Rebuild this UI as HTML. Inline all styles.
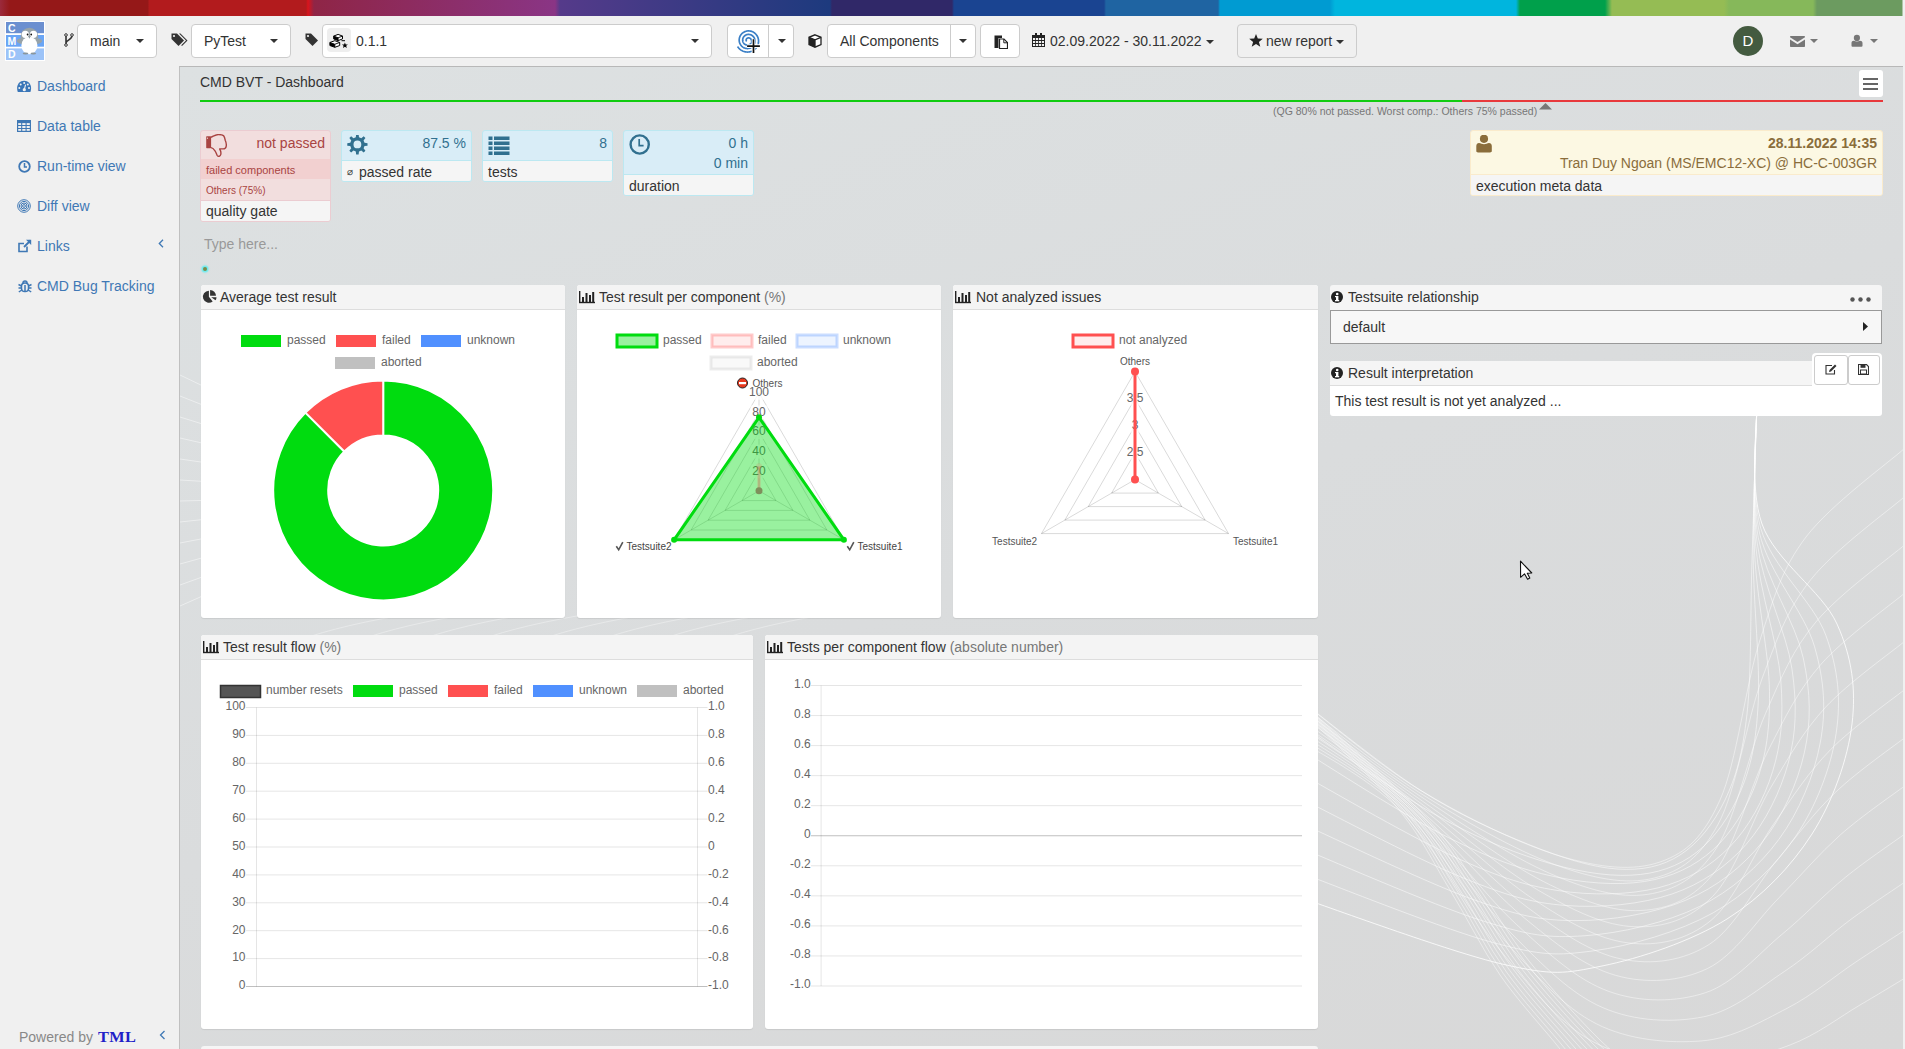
<!DOCTYPE html>
<html><head><meta charset="utf-8">
<style>
*{box-sizing:border-box;}
html,body{margin:0;padding:0;}
body{width:1905px;height:1049px;overflow:hidden;position:relative;background:#f0f0f0;font-family:"Liberation Sans",sans-serif;font-size:14px;color:#333;}
.abs{position:absolute;}
#strip{left:0;top:0;width:1905px;height:16px;background:linear-gradient(90deg,#9b2a3c 0px,#951818 10px,#951818 148px,#b21b1d 149px,#b21b1d 306px,#d9141c 308px,#8f2546 314px,#8a3585 555px,#553a8a 560px,#1d3a7e 830px,#302868 832px,#302868 952px,#1a4491 954px,#1a4491 1104px,#1f64a2 1106px,#1f64a2 1218px,#009bd2 1220px,#009bd2 1330px,#00b5de 1335px,#00b5de 1516px,#00a04b 1520px,#00a04b 1605px,#95bc54 1612px,#95bc54 1724px,#86b85a 1729px,#86b85a 1813px,#6c9b60 1817px,#6c9b60 1902px,#f0f0f0 1903px);}
#topbar{left:0;top:16px;width:1905px;height:51px;background:#f0f0f0;}
#sidebar{left:0;top:67px;width:179px;height:982px;background:#f0f0f0;}
#content{left:179px;top:66px;width:1724px;height:983px;border-top:1px solid #b8b8b8;border-left:1px solid #c0c0c0;background:linear-gradient(160deg,#dde1e2 0%,#dadcdd 50%,#d8d8d8 100%);overflow:hidden;}
.sel{position:absolute;top:24px;height:34px;background:#fff;border:1px solid #ccc;border-radius:4px;}
.caret{position:absolute;width:0;height:0;border-left:4px solid transparent;border-right:4px solid transparent;border-top:4px solid #333;}
.seltxt{position:absolute;top:8px;font-size:14px;color:#333;line-height:16px;}
.nav{position:absolute;left:37px;font-size:14px;color:#3f78b5;line-height:16px;}
.navi{position:absolute;left:17px;}
.panel{position:absolute;background:#fff;border-radius:3px;overflow:hidden;box-shadow:0 1px 1px rgba(0,0,0,0.08);}
.ph{position:absolute;left:0;top:0;right:0;height:25px;background:#f4f4f4;border-bottom:1px solid #ddd;}
.pt{position:absolute;top:4px;font-size:14px;color:#333;line-height:16px;white-space:nowrap;}
.kpi{position:absolute;border-radius:3px;overflow:hidden;}
svg text{font-family:"Liberation Sans",sans-serif;}
</style></head>
<body>
<div id="strip" class="abs"></div>
<div id="topbar" class="abs"></div>
<!-- logo -->
<div class="abs" style="left:5px;top:21px;width:40px;height:40px;background:#fff;">
 <svg width="38" height="38" viewBox="0 0 38 38" style="position:absolute;left:1px;top:1px">
  <rect x="0" y="0" width="38" height="11.2" fill="#6b8fd0"/>
  <rect x="0" y="13" width="38" height="11.7" fill="#6aa5f5"/>
  <rect x="0" y="26.4" width="38" height="11.6" fill="#9cc3f8"/>
  <text x="2" y="9.8" font-size="10.5" font-weight="bold" fill="#fff">C</text>
  <text x="1.6" y="23.2" font-size="10.5" font-weight="bold" fill="#fff">M</text>
  <text x="2" y="36.4" font-size="10.5" font-weight="bold" fill="#fff">D</text>
  <ellipse cx="23.4" cy="19" rx="12.6" ry="4" fill="#98a3a8"/>
  <circle cx="23.4" cy="14.5" r="8.8" fill="#98a3a8"/>
  <ellipse cx="23.4" cy="23.5" rx="8" ry="8.8" fill="#fff"/>
  <circle cx="19.3" cy="12.3" r="3.6" fill="#fff"/>
  <circle cx="27.5" cy="12.3" r="3.6" fill="#fff"/>
  <circle cx="21.6" cy="12.5" r="0.9" fill="#111"/>
  <circle cx="25.2" cy="12.5" r="0.9" fill="#111"/>
  <path d="M22.2 14.2 L24.6 14.2 L23.4 16.8 Z" fill="#8a969c"/>
  <ellipse cx="19.5" cy="31.5" rx="2.8" ry="1" fill="#8a969c"/>
  <ellipse cx="27.3" cy="31.5" rx="2.8" ry="1" fill="#8a969c"/>
 </svg>
</div>
<!-- branch icon -->
<svg class="abs" style="left:64px;top:33px" width="10" height="14" viewBox="0 0 10 14">
 <path d="M2 2.5 V11.5 M2 10 C2 7 8 7 8 2.5" stroke="#333" stroke-width="1.6" fill="none"/>
 <circle cx="2" cy="2" r="1.3" fill="#fff" stroke="#333" stroke-width="1"/>
 <circle cx="2" cy="12" r="1.3" fill="#fff" stroke="#333" stroke-width="1"/>
 <circle cx="8" cy="2" r="1.3" fill="#fff" stroke="#333" stroke-width="1"/>
</svg>
<div class="sel" style="left:77px;width:80px;"><span class="seltxt" style="left:12px;">main</span><span class="caret" style="left:58px;top:14px;"></span></div>
<!-- tags icon -->
<svg class="abs" style="left:171px;top:33px" width="17" height="14" viewBox="0 0 17 14">
 <path d="M0.5 0.5 H6 L13 7.5 L7.5 13 L0.5 6 Z" fill="#333"/>
 <circle cx="3" cy="3" r="1.1" fill="#f0f0f0"/>
 <path d="M8 0.5 H9.5 L16.5 7.5 L11 13 L10.2 12.2 L15 7.5 Z" fill="#333"/>
</svg>
<div class="sel" style="left:191px;width:100px;"><span class="seltxt" style="left:12px;">PyTest</span><span class="caret" style="left:78px;top:14px;"></span></div>
<!-- tag icon -->
<svg class="abs" style="left:305px;top:33px" width="14" height="14" viewBox="0 0 14 14">
 <path d="M0.5 0.5 H6 L13 7.5 L7.5 13 L0.5 6 Z" fill="#333"/>
 <circle cx="3" cy="3" r="1.1" fill="#f0f0f0"/>
</svg>
<div class="sel" style="left:322px;width:390px;">
 <div class="abs" style="left:4px;top:3px;width:24px;height:24px;background:#eee;border-radius:4px;"></div>
 <svg class="abs" style="left:5px;top:7px" width="22" height="17" viewBox="0 0 22 17"><polygon points="10.10,2.40 14.50,4.07 14.50,6.93 10.10,8.60 5.70,6.93 5.70,4.07" fill="#fff" stroke="#000" stroke-width="1" stroke-linejoin="round"/><polygon points="5.70,4.07 10.10,5.75 10.10,8.60 5.70,6.93" fill="#000"/><polyline points="5.70,4.07 10.10,5.75 14.50,4.07" fill="none" stroke="#000" stroke-width="0.9"/><line x1="10.10" y1="5.75" x2="10.10" y2="8.60" stroke="#000" stroke-width="0.9"/><rect x="13.5" y="8.2" width="3.5" height="1" fill="#000"/><polygon points="6.80,8.70 11.70,10.48 11.70,13.52 6.80,15.30 1.90,13.52 1.90,10.48" fill="#fff" stroke="#000" stroke-width="1" stroke-linejoin="round"/><polygon points="1.90,10.48 6.80,12.26 6.80,15.30 1.90,13.52" fill="#000"/><polyline points="1.90,10.48 6.80,12.26 11.70,10.48" fill="none" stroke="#000" stroke-width="0.9"/><line x1="6.80" y1="12.26" x2="6.80" y2="15.30" stroke="#000" stroke-width="0.9"/><path d="M16.9 10.4 L17.7 12.4 L19.9 12.5 L18.2 13.8 L18.8 15.9 L16.9 14.7 L15 15.9 L15.6 13.8 L13.9 12.5 L16.1 12.4 Z" fill="#000"/></svg>
 <span class="seltxt" style="left:33px;">0.1.1</span>
 <span class="caret" style="left:368px;top:14px;"></span>
</div>
<!-- diff button group -->
<div class="sel" style="left:727px;width:67px;">
 <div class="abs" style="left:40px;top:0;width:1px;height:32px;background:#ccc;"></div>
 <svg class="abs" style="left:0px;top:0px" width="40" height="34" viewBox="0 0 40 34">
  <path d="M18.70 16.35 L18.63 16.28 L18.55 16.21 L18.48 16.13 L18.42 16.04 L18.36 15.95 L18.31 15.85 L18.26 15.75 L18.22 15.64 L18.19 15.52 L18.16 15.41 L18.14 15.29 L18.13 15.16 L18.13 15.03 L18.13 14.91 L18.15 14.78 L18.17 14.65 L18.21 14.51 L18.25 14.38 L18.30 14.26 L18.37 14.13 L18.44 14.00 L18.52 13.88 L18.61 13.76 L18.71 13.65 L18.81 13.54 L18.93 13.44 L19.05 13.35 L19.18 13.26 L19.32 13.18 L19.47 13.11 L19.62 13.04 L19.78 12.99 L19.94 12.95 L20.11 12.91 L20.28 12.89 L20.46 12.88 L20.64 12.88 L20.82 12.89 L21.00 12.91 L21.18 12.95 L21.36 13.00 L21.54 13.06 L21.71 13.13 L21.89 13.22 L22.06 13.31 L22.22 13.42 L22.38 13.54 L22.53 13.68 L22.68 13.82 L22.81 13.98 L22.94 14.14 L23.06 14.31 L23.17 14.50 L23.27 14.69 L23.35 14.89 L23.42 15.09 L23.48 15.31 L23.53 15.53 L23.56 15.75 L23.58 15.98 L23.58 16.21 L23.57 16.44 L23.55 16.67 L23.51 16.90 L23.45 17.14 L23.38 17.37 L23.29 17.59 L23.19 17.81 L23.07 18.03 L22.94 18.24 L22.79 18.45 L22.63 18.64 L22.45 18.83 L22.26 19.01 L22.06 19.17 L21.85 19.33 L21.63 19.47 L21.39 19.59 L21.15 19.71 L20.89 19.81 L20.63 19.89 L20.37 19.95 L20.09 20.00 L19.81 20.04 L19.53 20.05 L19.25 20.05 L18.96 20.02 L18.68 19.98 L18.39 19.93 L18.11 19.85 L17.83 19.75 L17.55 19.64 L17.29 19.50 L17.02 19.35 L16.77 19.19 L16.53 19.00 L16.29 18.80 L16.07 18.58 L15.86 18.35 L15.67 18.10 L15.49 17.84 L15.33 17.56 L15.18 17.28 L15.05 16.98 L14.94 16.68 L14.85 16.36 L14.77 16.04 L14.72 15.71 L14.69 15.38 L14.68 15.04 L14.69 14.70 L14.72 14.36 L14.78 14.02 L14.85 13.69 L14.95 13.35 L15.07 13.02 L15.21 12.70 L15.38 12.39 L15.56 12.08 L15.76 11.79 L15.99 11.50 L16.23 11.23 L16.49 10.98 L16.77 10.74 L17.06 10.51 L17.37 10.31 L17.70 10.12 L18.03 9.95 L18.38 9.81 L18.74 9.68 L19.11 9.58 L19.49 9.50 L19.87 9.45 L20.26 9.42 L20.65 9.41 L21.04 9.43 L21.44 9.47 L21.83 9.54 L22.22 9.63 L22.60 9.75 L22.98 9.90 L23.35 10.07 L23.71 10.26 L24.06 10.47 L24.40 10.71 L24.72 10.98 L25.03 11.26 L25.32 11.56 L25.59 11.88 L25.85 12.23 L26.08 12.58 L26.29 12.96 L26.47 13.35 L26.64 13.75 L26.77 14.16 L26.89 14.58 L26.97 15.01 L27.03 15.45 L27.06 15.90 L27.06 16.34 L27.04 16.79 L26.98 17.24 L26.90 17.68 L26.79 18.12 L26.65 18.56 L26.48 18.99 L26.28 19.40 L26.06 19.81 L25.81 20.21 L25.54 20.59 L25.24 20.95 L24.91 21.29 L24.57 21.62 L24.20 21.92 L23.81 22.20 L23.41 22.46 L22.98 22.69 L22.54 22.90 L22.09 23.08 L21.62 23.23 L21.14 23.35 L20.66 23.44 L20.17 23.50 L19.67 23.53 L19.17 23.53 L18.66 23.50 L18.16 23.43 L17.66 23.34 L17.17 23.21 L16.69 23.05 L16.21 22.85 L15.74 22.63 L15.29 22.38 L14.85 22.10 L14.43 21.79 L14.03 21.45 L13.65 21.09 L13.29 20.70 L12.95 20.28 L12.64 19.85 L12.36 19.39 L12.10 18.92 L11.87 18.43 L11.68 17.92 L11.51 17.40 L11.38 16.87 L11.29 16.33 L11.22 15.78 L11.19 15.23 L11.20 14.67 L11.24 14.12 L11.32 13.56 L11.43 13.01 L11.57 12.47 L11.76 11.93 L11.97 11.40 L12.22 10.89 L12.50 10.39 L12.82 9.91 L13.16 9.44 L13.54 9.00 L13.94 8.58 L14.37 8.19 L14.83 7.82 L15.31 7.48 L15.82 7.17 L16.34 6.89 L16.88 6.65 L17.44 6.44 L18.01 6.26 L18.60 6.12 L19.20 6.01 L19.80 5.95 L20.41 5.92 L21.02 5.93 L21.63 5.98 L22.24 6.06 L22.84 6.19 L23.44 6.35 L24.03 6.56 L24.60 6.80 L25.16 7.07 L25.71 7.38 L26.24 7.73 L26.74 8.11 L27.22 8.53 L27.68 8.97 L28.11 9.45 L28.51 9.95 L28.88 10.47 L29.21 11.03 L29.51 11.60 L29.78 12.19 L30.01 12.81 L30.20 13.43 L30.35 14.07 L30.46 14.72 L30.53 15.38 L30.56 16.04 L30.54 16.71 L30.49 17.37 L30.39 18.04 L30.25 18.69 L30.07 19.34 L29.84 19.98 L29.58 20.61 L29.28 21.22 L28.93 21.81 L28.55 22.38 L28.14 22.93 L27.69 23.45 L27.20 23.94 L26.68 24.41 L26.14 24.84 L25.56 25.23 L24.96 25.60 L24.34 25.92 L23.69 26.21 L23.03 26.45 L22.35 26.65 L21.66 26.81 L20.95 26.93 L20.24 27.00 L19.52 27.03 L18.80 27.01 L18.08 26.95 L17.36 26.84 L16.65 26.69 L15.95 26.49 L15.26 26.24 L14.59 25.96 L13.93 25.62 L13.29 25.25 L12.68 24.84 L12.09 24.39 L11.53 23.90 L11.00 23.37 L10.50 22.81 L10.03 22.22 L9.61 21.60" fill="none" stroke="#3a7fc6" stroke-width="1.7"/>
  <path d="M25.5 14.3 V27.9 M19.1 21.1 H31.9" stroke="#fff" stroke-width="3.6"/>
  <path d="M25.5 14.3 V27.9 M19.1 21.1 H31.9" stroke="#111" stroke-width="1.7"/>
 </svg>
 <span class="caret" style="left:50px;top:14px;"></span>
</div>
<!-- cube icon -->
<svg class="abs" style="left:808px;top:34px" width="14" height="14" viewBox="0 0 14 14">
 <path d="M7 0.8 L13 3.3 V10.5 L7 13.2 L1 10.5 V3.3 Z" fill="#fff" stroke="#222" stroke-width="1.3"/>
 <path d="M1 3.3 L7 5.8 L13 3.3 M7 5.8 V13" stroke="#222" stroke-width="1.3" fill="none"/>
 <path d="M1 3.3 L7 5.8 V13.2 L1 10.5 Z" fill="#222"/>
</svg>
<div class="sel" style="left:827px;width:149px;">
 <span class="seltxt" style="left:12px;">All Components</span>
 <div class="abs" style="left:122px;top:0;width:1px;height:32px;background:#ccc;"></div>
 <span class="caret" style="left:131px;top:14px;"></span>
</div>
<div class="sel" style="left:980px;width:40px;">
 <svg class="abs" style="left:13px;top:9px" width="14" height="15" viewBox="0 0 14 15">
  <path d="M0.5 1.5 H8 V4 H4.5 V14 H0.5 Z" fill="#222"/>
  <path d="M5.5 5 H10 L13.5 8.5 V14.5 H5.5 Z" fill="#fff" stroke="#222" stroke-width="1.2"/>
  <path d="M9.8 5 V8.8 H13.5" fill="none" stroke="#222" stroke-width="1"/>
 </svg>
</div>
<!-- calendar -->
<svg class="abs" style="left:1032px;top:33px" width="13" height="14" viewBox="0 0 13 14">
 <rect x="0" y="2" width="13" height="12" fill="#222"/>
 <rect x="3" y="0" width="2" height="3" fill="#222"/><rect x="8" y="0" width="2" height="3" fill="#222"/>
 <g fill="#f0f0f0">
  <rect x="1" y="5" width="2.2" height="2"/><rect x="4" y="5" width="2.2" height="2"/><rect x="7" y="5" width="2.2" height="2"/><rect x="10" y="5" width="2" height="2"/>
  <rect x="1" y="8" width="2.2" height="2"/><rect x="4" y="8" width="2.2" height="2"/><rect x="7" y="8" width="2.2" height="2"/><rect x="10" y="8" width="2" height="2"/>
  <rect x="1" y="11" width="2.2" height="2"/><rect x="4" y="11" width="2.2" height="2"/><rect x="7" y="11" width="2.2" height="2"/><rect x="10" y="11" width="2" height="2"/>
 </g>
</svg>
<span class="abs" style="left:1050px;top:33px;font-size:14px;line-height:16px;color:#333;">02.09.2022 - 30.11.2022</span>
<span class="caret" style="left:1206px;top:40px;border-width:4px 4px 0 4px;"></span>
<div class="sel" style="left:1237px;width:120px;background:#f0f0f0;">
 <svg class="abs" style="left:11px;top:9px" width="14" height="13" viewBox="0 0 14 13"><path d="M7 0 L8.8 4.6 L13.8 4.8 L9.9 7.9 L11.3 12.8 L7 10 L2.7 12.8 L4.1 7.9 L0.2 4.8 L5.2 4.6 Z" fill="#222"/></svg>
 <span class="seltxt" style="left:28px;">new report</span>
 <span class="caret" style="left:98px;top:15px;border-width:4px 4px 0 4px;"></span>
</div>
<!-- avatar -->
<div class="abs" style="left:1733px;top:26px;width:30px;height:30px;border-radius:50%;background:#445b40;color:#fff;font-size:15px;line-height:30px;text-align:center;">D</div>
<svg class="abs" style="left:1790px;top:36px" width="15" height="11" viewBox="0 0 15 11">
 <path d="M0.8 0 H14.2 C14.7 0 15 0.3 15 0.8 V1.3 L7.5 6 L0 1.3 V0.8 C0 0.3 0.3 0 0.8 0 Z" fill="#777"/>
 <path d="M0 3.6 L7.5 8.3 L15 3.6 V10.2 C15 10.7 14.7 11 14.2 11 H0.8 C0.3 11 0 10.7 0 10.2 Z" fill="#777"/>
</svg>
<span class="caret" style="left:1810px;top:39px;border-width:4px 4px 0 4px;border-top-color:#777;"></span>
<svg class="abs" style="left:1851px;top:34px" width="12" height="13" viewBox="0 0 12 13">
 <circle cx="5.9" cy="3.9" r="3.1" fill="#777"/>
 <path d="M0.5 11.8 V9 C0.5 7.5 1.5 6.8 2.8 6.8 C3.8 7.2 4.8 7.5 5.9 7.5 C7 7.5 8 7.2 9 6.8 C10.3 6.8 11.5 7.5 11.5 9 V11.8 C11.5 12.4 11.1 12.7 10.5 12.7 H1.5 C0.9 12.7 0.5 12.4 0.5 11.8 Z" fill="#777"/>
</svg>
<span class="caret" style="left:1870px;top:39px;border-width:4px 4px 0 4px;border-top-color:#777;"></span>

<div id="sidebar" class="abs"></div>
<!-- sidebar nav -->
<svg class="abs" style="left:17px;top:80px" width="15" height="13" viewBox="0 0 15 13">
 <path d="M7.1 0.8 C3 0.8 0.1 4 0.1 8 C0.1 9.5 0.3 10.8 0.8 12 H13.4 C13.9 10.8 14.1 9.5 14.1 8 C14.1 4 11.2 0.8 7.1 0.8 Z" fill="#3a76b8"/>
 <g fill="#f0f0f0"><circle cx="7.2" cy="3" r="1"/><circle cx="3.7" cy="4.6" r="1"/><circle cx="10.8" cy="4.6" r="1"/><circle cx="2.3" cy="8" r="1"/><circle cx="12" cy="8" r="1"/><circle cx="7.3" cy="9.7" r="1.6"/></g>
 <path d="M7.3 9.5 L8.6 4.6" stroke="#f0f0f0" stroke-width="1.1"/>
</svg>
<span class="nav" style="top:78px;">Dashboard</span>
<svg class="abs" style="left:17px;top:120px" width="14" height="12" viewBox="0 0 14 12">
 <rect x="0.6" y="0.6" width="12.8" height="10.8" fill="none" stroke="#3f78b5" stroke-width="1.2"/>
 <rect x="0.6" y="0.6" width="12.8" height="2.5" fill="#3f78b5"/>
 <path d="M0.6 5.5 H13.4 M0.6 8.5 H13.4 M4.7 0.6 V11.4 M9.1 0.6 V11.4" stroke="#3f78b5" stroke-width="1.1"/>
</svg>
<span class="nav" style="top:118px;">Data table</span>
<svg class="abs" style="left:18px;top:160px" width="13" height="13" viewBox="0 0 13 13">
 <circle cx="6.5" cy="6.5" r="5.3" fill="none" stroke="#3f78b5" stroke-width="1.8"/>
 <path d="M6.5 3 V7 H9" fill="none" stroke="#3f78b5" stroke-width="1.5"/>
</svg>
<span class="nav" style="top:158px;">Run-time view</span>
<svg class="abs" style="left:17px;top:199px" width="14" height="14" viewBox="0 0 14 14">
 <g fill="none" stroke="#3f78b5" stroke-width="1">
  <circle cx="7" cy="7" r="6.3"/><circle cx="7" cy="7" r="4.6"/><circle cx="7" cy="7" r="3"/><circle cx="7" cy="7" r="1.4"/>
 </g>
</svg>
<span class="nav" style="top:198px;">Diff view</span>
<svg class="abs" style="left:18px;top:239px" width="14" height="14" viewBox="0 0 14 14">
 <path d="M9 7.5 V12.5 H1 V4.5 H6" fill="none" stroke="#3f78b5" stroke-width="1.6"/>
 <path d="M8 0.8 H13.2 V6 Z" fill="#3f78b5"/>
 <path d="M12.5 1.5 L6 8" stroke="#3f78b5" stroke-width="1.8"/>
</svg>
<span class="nav" style="top:238px;">Links</span>
<svg class="abs" style="left:158px;top:239px" width="6" height="9" viewBox="0 0 6 9"><path d="M5 0.8 L1.3 4.5 L5 8.2" fill="none" stroke="#3f78b5" stroke-width="1.3"/></svg>
<svg class="abs" style="left:18px;top:279px" width="14" height="14" viewBox="0 0 14 14">
 <g fill="none" stroke="#3f78b5" stroke-width="1.5">
  <rect x="3.5" y="4" width="7" height="8.5" rx="3.3"/>
  <path d="M5 4 A2 2 0 0 1 9 4"/>
  <path d="M0.5 5.5 L3.5 7 M13.5 5.5 L10.5 7 M0.5 9 H3.5 M13.5 9 H10.5 M0.8 13 L3.8 11 M13.2 13 L10.2 11 M7 6 V12"/>
 </g>
</svg>
<span class="nav" style="top:278px;">CMD Bug Tracking</span>
<span class="abs" style="left:19px;top:1029px;font-size:14px;line-height:16px;color:#888;">Powered by</span>
<span class="abs" style="left:98px;top:1029px;font-family:'Liberation Serif',serif;font-weight:bold;font-size:15.5px;line-height:16px;color:#2020c8;letter-spacing:0.4px;transform:scaleX(1.05);transform-origin:left;">TML</span>
<svg class="abs" style="left:159px;top:1030px" width="7" height="10" viewBox="0 0 7 10"><path d="M5.5 1 L1.5 5 L5.5 9" fill="none" stroke="#3f78b5" stroke-width="1.3"/></svg>

<div id="content" class="abs"><!--WAVES--><svg class="abs" style="left:0;top:0" width="1723" height="982" viewBox="180 67 1723 982"><path d="M1290.0 692.0 C1311.7 708.3 1380.0 764.5 1420.0 790.0 C1460.0 815.5 1497.2 831.8 1530.0 845.0 C1562.8 858.2 1592.0 867.3 1617.0 869.0 C1642.0 870.7 1662.0 866.5 1680.0 855.0 C1698.0 843.5 1713.8 823.5 1725.0 800.0 C1736.2 776.5 1742.5 754.0 1747.0 714.0 C1751.5 674.0 1750.3 612.3 1752.0 560.0 C1753.7 507.7 1756.2 426.7 1757.0 400.0" stroke="rgba(255,255,255,0.5)" stroke-width="1.0" fill="none"/><path d="M1290.0 717.2 C1313.4 733.0 1388.8 787.9 1430.2 811.8 C1471.8 835.6 1505.6 849.5 1539.0 860.1 C1572.4 870.7 1604.5 876.5 1630.8 875.2 C1657.0 874.0 1678.1 866.5 1696.5 852.4 C1714.9 838.2 1730.6 815.4 1740.9 790.5 C1751.2 765.6 1756.2 741.9 1758.2 702.8 C1760.3 663.6 1753.5 606.0 1753.2 555.5 C1753.0 505.0 1756.4 425.9 1757.0 400.0" stroke="rgba(255,255,255,0.5)" stroke-width="1.0" fill="none"/><path d="M1290.0 742.5 C1315.1 757.7 1397.5 811.4 1440.5 833.5 C1483.5 855.6 1514.0 867.2 1548.0 875.2 C1582.0 883.2 1617.0 885.8 1644.5 881.5 C1672.0 877.2 1694.3 866.5 1713.0 849.8 C1731.7 833.0 1747.3 807.4 1756.8 781.0 C1766.2 754.6 1769.9 729.8 1769.5 691.5 C1769.1 653.2 1756.6 599.6 1754.5 551.0 C1752.4 502.4 1756.6 425.2 1757.0 400.0" stroke="rgba(255,255,255,0.5)" stroke-width="1.0" fill="none"/><path d="M1290.0 767.8 C1316.8 782.3 1406.2 834.8 1450.8 855.2 C1495.2 875.7 1522.4 885.0 1557.0 890.4 C1591.6 895.8 1629.5 895.0 1658.2 887.8 C1687.0 880.5 1710.4 866.5 1729.5 847.1 C1748.6 827.8 1764.1 799.3 1772.6 771.5 C1781.2 743.7 1783.6 717.8 1780.8 680.2 C1777.9 642.8 1759.7 593.2 1755.8 546.5 C1751.8 499.8 1756.8 424.4 1757.0 400.0" stroke="rgba(255,255,255,0.5)" stroke-width="1.0" fill="none"/><path d="M1290.0 793.0 C1318.5 807.0 1415.0 858.2 1461.0 877.0 C1507.0 895.8 1530.8 902.7 1566.0 905.5 C1601.2 908.3 1642.0 904.2 1672.0 894.0 C1702.0 883.8 1726.6 866.5 1746.0 844.5 C1765.4 822.5 1780.8 791.2 1788.5 762.0 C1796.2 732.8 1797.2 705.7 1792.0 669.0 C1786.8 632.3 1762.8 586.8 1757.0 542.0 C1751.2 497.2 1757.0 423.7 1757.0 400.0" stroke="rgba(255,255,255,0.5)" stroke-width="1.0" fill="none"/><path d="M1290.0 818.2 C1320.2 831.7 1423.8 881.7 1471.2 898.8 C1518.8 915.8 1539.2 920.4 1575.0 920.6 C1610.8 920.9 1654.5 913.4 1685.8 900.2 C1717.0 887.1 1742.7 866.5 1762.5 841.9 C1782.3 817.2 1797.6 783.2 1804.4 752.5 C1811.2 721.8 1810.9 693.6 1803.2 657.8 C1795.6 621.9 1766.0 580.5 1758.2 537.5 C1750.5 494.5 1757.2 422.9 1757.0 400.0" stroke="rgba(255,255,255,0.5)" stroke-width="1.0" fill="none"/><path d="M1290.0 843.5 C1321.9 856.3 1432.5 905.1 1481.5 920.5 C1530.5 935.9 1547.7 938.1 1584.0 935.8 C1620.3 933.4 1667.0 922.6 1699.5 906.5 C1732.0 890.4 1758.9 866.5 1779.0 839.2 C1799.1 812.0 1814.3 775.1 1820.2 743.0 C1826.2 710.9 1824.6 681.5 1814.5 646.5 C1804.4 611.5 1769.1 574.1 1759.5 533.0 C1749.9 491.9 1757.4 422.2 1757.0 400.0" stroke="rgba(255,255,255,0.5)" stroke-width="1.0" fill="none"/><path d="M1290.0 868.8 C1323.6 881.0 1441.2 928.6 1491.8 942.2 C1542.2 955.9 1556.1 955.8 1593.0 950.9 C1629.9 946.0 1679.5 931.8 1713.2 912.8 C1747.0 893.7 1775.0 866.5 1795.5 836.6 C1816.0 806.8 1831.1 767.1 1836.1 733.5 C1841.2 699.9 1838.3 669.4 1825.8 635.2 C1813.2 601.1 1772.2 567.7 1760.8 528.5 C1749.3 489.3 1757.6 421.4 1757.0 400.0" stroke="rgba(255,255,255,0.5)" stroke-width="1.0" fill="none"/><path d="M1290.0 894.0 C1325.3 905.7 1450.0 952.0 1502.0 964.0 C1554.0 976.0 1564.5 973.5 1602.0 966.0 C1639.5 958.5 1692.0 941.0 1727.0 919.0 C1762.0 897.0 1791.2 866.5 1812.0 834.0 C1832.8 801.5 1847.8 759.0 1852.0 724.0 C1856.2 689.0 1852.0 657.3 1837.0 624.0 C1822.0 590.7 1775.3 561.3 1762.0 524.0 C1748.7 486.7 1757.8 420.7 1757.0 400.0" stroke="rgba(255,255,255,0.8)" stroke-width="1.0" fill="none"/><path d="M1290.0 692.0 C1311.7 708.3 1375.0 762.7 1420.0 790.0 C1465.0 817.3 1520.0 844.0 1560.0 856.0 C1600.0 868.0 1633.3 871.3 1660.0 862.0 C1686.7 852.7 1703.3 837.0 1720.0 800.0 C1736.7 763.0 1745.7 683.8 1760.0 640.0 C1774.3 596.2 1781.8 569.0 1806.0 537.0 C1830.2 505.0 1888.5 462.8 1905.0 448.0" stroke="rgba(255,255,255,0.45)" stroke-width="1.0" fill="none"/><path d="M1290.0 695.9 C1311.4 711.9 1374.1 763.7 1418.2 791.8 C1462.3 819.9 1515.3 850.2 1554.5 864.5 C1593.8 878.9 1626.4 884.9 1653.6 878.2 C1680.9 871.4 1700.0 857.7 1718.2 824.1 C1736.4 790.5 1747.3 717.6 1762.7 676.8 C1778.2 636.1 1787.1 609.7 1810.9 579.5 C1834.7 549.4 1889.7 509.8 1905.5 495.9" stroke="rgba(255,255,255,0.45)" stroke-width="1.0" fill="none"/><path d="M1290.0 699.8 C1311.1 715.5 1373.2 764.8 1416.4 793.6 C1459.5 822.5 1510.6 856.3 1549.1 873.1 C1587.6 889.9 1619.4 898.5 1647.3 894.4 C1675.2 890.2 1696.7 878.3 1716.4 848.2 C1736.1 818.1 1748.9 751.3 1765.5 713.6 C1782.0 676.0 1792.4 650.4 1815.8 622.1 C1839.2 593.8 1890.9 556.9 1905.9 543.8" stroke="rgba(255,255,255,0.45)" stroke-width="1.0" fill="none"/><path d="M1290.0 703.7 C1310.8 719.0 1372.3 765.8 1414.5 795.5 C1456.8 825.1 1505.9 862.5 1543.6 881.6 C1581.4 900.8 1612.4 912.1 1640.9 910.5 C1669.4 909.0 1693.3 899.0 1714.5 872.3 C1735.8 845.6 1750.5 785.1 1768.2 750.5 C1785.9 715.8 1797.7 691.1 1820.7 664.6 C1843.8 638.2 1892.1 603.9 1906.4 591.7" stroke="rgba(255,255,255,0.45)" stroke-width="1.0" fill="none"/><path d="M1290.0 707.6 C1310.5 722.6 1371.4 766.8 1412.7 797.3 C1454.1 827.7 1501.2 868.6 1538.2 890.2 C1575.2 911.8 1605.5 925.7 1634.5 926.7 C1663.6 927.8 1690.0 919.6 1712.7 896.4 C1735.5 873.1 1752.1 818.8 1770.9 787.3 C1789.7 755.7 1803.0 731.8 1825.6 707.2 C1848.3 682.6 1893.3 650.9 1906.8 639.6" stroke="rgba(255,255,255,0.45)" stroke-width="1.0" fill="none"/><path d="M1290.0 711.5 C1310.2 726.1 1370.5 767.9 1410.9 799.1 C1451.4 830.3 1496.5 874.8 1532.7 898.7 C1568.9 922.7 1598.5 939.3 1628.2 942.9 C1657.9 946.5 1686.7 940.3 1710.9 920.5 C1735.2 900.7 1753.7 852.5 1773.6 824.1 C1793.6 795.6 1808.3 772.5 1830.5 749.7 C1852.8 727.0 1894.5 697.9 1907.3 687.5" stroke="rgba(255,255,255,0.45)" stroke-width="1.0" fill="none"/><path d="M1290.0 715.5 C1309.8 729.7 1369.5 768.9 1409.1 800.9 C1448.6 832.9 1491.8 880.9 1527.3 907.3 C1562.7 933.6 1591.5 952.9 1621.8 959.1 C1652.1 965.3 1683.3 960.9 1709.1 944.5 C1734.8 928.2 1755.3 886.3 1776.4 860.9 C1797.4 835.5 1813.6 813.2 1835.5 792.3 C1857.3 771.4 1895.7 744.9 1907.7 735.5" stroke="rgba(255,255,255,0.45)" stroke-width="1.0" fill="none"/><path d="M1290.0 719.4 C1309.5 733.3 1368.6 770.0 1407.3 802.7 C1445.9 835.5 1487.1 887.1 1521.8 915.8 C1556.5 944.6 1584.5 966.5 1615.5 975.3 C1646.4 984.1 1680.0 981.6 1707.3 968.6 C1734.5 955.7 1756.9 920.0 1779.1 897.7 C1801.3 875.4 1818.8 853.9 1840.4 834.8 C1861.9 815.8 1896.9 791.9 1908.2 783.4" stroke="rgba(255,255,255,0.45)" stroke-width="1.0" fill="none"/><path d="M1290.0 723.3 C1309.2 736.8 1367.7 771.0 1405.5 804.5 C1443.2 838.1 1482.4 893.2 1516.4 924.4 C1550.3 955.5 1577.6 980.1 1609.1 991.5 C1640.6 1002.8 1676.7 1002.2 1705.5 992.7 C1734.2 983.2 1758.5 953.8 1781.8 934.5 C1805.1 915.3 1824.1 894.6 1845.3 877.4 C1866.4 860.2 1898.1 839.0 1908.6 831.3" stroke="rgba(255,255,255,0.45)" stroke-width="1.0" fill="none"/><path d="M1290.0 727.2 C1308.9 740.4 1366.8 772.1 1403.6 806.4 C1440.5 840.7 1477.7 899.4 1510.9 932.9 C1544.1 966.5 1570.6 993.7 1602.7 1007.6 C1634.8 1021.6 1673.3 1022.9 1703.6 1016.8 C1733.9 1010.8 1760.1 987.5 1784.5 971.4 C1809.0 955.2 1829.4 935.3 1850.2 919.9 C1870.9 904.5 1899.3 886.0 1909.1 879.2" stroke="rgba(255,255,255,0.45)" stroke-width="1.0" fill="none"/><path d="M1290.0 731.1 C1308.6 743.9 1365.9 773.1 1401.8 808.2 C1437.7 843.2 1473.0 905.5 1505.5 941.5 C1537.9 977.4 1563.6 1007.2 1596.4 1023.8 C1629.1 1040.4 1670.0 1043.5 1701.8 1040.9 C1733.6 1038.3 1761.7 1021.3 1787.3 1008.2 C1812.8 995.1 1834.7 976.0 1855.1 962.5 C1875.5 948.9 1900.5 933.0 1909.5 927.1" stroke="rgba(255,255,255,0.45)" stroke-width="1.0" fill="none"/><path d="M1290.0 735.0 C1308.3 747.5 1365.0 774.2 1400.0 810.0 C1435.0 845.8 1468.3 911.7 1500.0 950.0 C1531.7 988.3 1556.7 1020.8 1590.0 1040.0 C1623.3 1059.2 1666.7 1064.2 1700.0 1065.0 C1733.3 1065.8 1763.3 1055.0 1790.0 1045.0 C1816.7 1035.0 1840.0 1016.7 1860.0 1005.0 C1880.0 993.3 1901.7 980.0 1910.0 975.0" stroke="rgba(255,255,255,0.45)" stroke-width="1.0" fill="none"/><path d="M1290.0 692.0 C1312.2 712.3 1392.0 782.0 1423.0 814.0 C1454.0 846.0 1458.3 859.5 1476.0 884.0 C1493.7 908.5 1508.3 935.0 1529.0 961.0 C1549.7 987.0 1579.8 1020.2 1600.0 1040.0 C1620.2 1059.8 1641.7 1073.3 1650.0 1080.0" stroke="rgba(255,255,255,0.45)" stroke-width="1.0" fill="none"/><path d="M1290.0 692.9 C1311.6 712.9 1389.4 781.0 1419.9 813.0 C1450.4 845.0 1455.5 859.7 1473.1 884.7 C1490.8 909.6 1505.4 936.5 1525.8 962.6 C1546.2 988.6 1576.0 1021.2 1595.6 1041.0 C1615.1 1060.8 1635.4 1074.4 1643.3 1081.1" stroke="rgba(255,255,255,0.45)" stroke-width="1.0" fill="none"/><path d="M1290.0 693.8 C1311.1 713.5 1386.7 780.1 1416.8 812.0 C1446.8 843.9 1452.6 860.0 1470.2 885.3 C1487.9 910.7 1502.4 938.0 1522.6 964.1 C1542.7 990.2 1572.1 1022.3 1591.1 1042.0 C1610.1 1061.7 1629.1 1075.5 1636.7 1082.2" stroke="rgba(255,255,255,0.45)" stroke-width="1.0" fill="none"/><path d="M1290.0 694.7 C1310.6 714.1 1384.1 779.1 1413.7 811.0 C1443.2 842.9 1449.7 860.2 1467.3 886.0 C1484.9 911.8 1499.4 939.5 1519.3 965.7 C1539.2 991.8 1568.2 1023.4 1586.7 1043.0 C1605.1 1062.6 1622.8 1076.6 1630.0 1083.3" stroke="rgba(255,255,255,0.45)" stroke-width="1.0" fill="none"/><path d="M1290.0 695.6 C1310.1 714.6 1381.5 778.1 1410.6 810.0 C1439.6 841.9 1446.9 860.5 1464.4 886.7 C1482.0 912.9 1496.5 941.0 1516.1 967.2 C1535.7 993.4 1564.4 1024.5 1582.2 1044.0 C1600.1 1063.5 1616.5 1077.7 1623.3 1084.4" stroke="rgba(255,255,255,0.45)" stroke-width="1.0" fill="none"/><path d="M1290.0 696.4 C1309.6 715.2 1378.9 777.2 1407.4 809.0 C1436.0 840.8 1444.0 860.7 1461.6 887.3 C1479.1 914.0 1493.5 942.5 1512.9 968.8 C1532.3 995.1 1560.5 1025.5 1577.8 1045.0 C1595.1 1064.5 1610.2 1078.8 1616.7 1085.6" stroke="rgba(255,255,255,0.45)" stroke-width="1.0" fill="none"/><path d="M1290.0 697.3 C1309.1 715.8 1376.2 776.2 1404.3 808.0 C1432.4 839.8 1441.1 860.9 1458.7 888.0 C1476.2 915.1 1490.6 944.0 1509.7 970.3 C1528.8 996.7 1556.6 1026.6 1573.3 1046.0 C1590.1 1065.4 1603.9 1079.9 1610.0 1086.7" stroke="rgba(255,255,255,0.45)" stroke-width="1.0" fill="none"/><path d="M1290.0 698.2 C1308.5 716.4 1373.6 775.3 1401.2 807.0 C1428.9 838.7 1438.2 861.2 1455.8 888.7 C1473.3 916.1 1487.6 945.5 1506.4 971.9 C1525.3 998.3 1552.7 1027.7 1568.9 1047.0 C1585.0 1066.3 1597.6 1081.0 1603.3 1087.8" stroke="rgba(255,255,255,0.45)" stroke-width="1.0" fill="none"/><path d="M1290.0 699.1 C1308.0 716.9 1371.0 774.3 1398.1 806.0 C1425.3 837.7 1435.4 861.4 1452.9 889.3 C1470.4 917.2 1484.6 947.0 1503.2 973.4 C1521.8 999.9 1548.9 1028.8 1564.4 1048.0 C1580.0 1067.2 1591.3 1082.1 1596.7 1088.9" stroke="rgba(255,255,255,0.45)" stroke-width="1.0" fill="none"/><path d="M1290.0 700.0 C1307.5 717.5 1368.3 773.3 1395.0 805.0 C1421.7 836.7 1432.5 861.7 1450.0 890.0 C1467.5 918.3 1481.7 948.5 1500.0 975.0 C1518.3 1001.5 1545.0 1029.8 1560.0 1049.0 C1575.0 1068.2 1585.0 1083.2 1590.0 1090.0" stroke="rgba(255,255,255,0.45)" stroke-width="1.0" fill="none"/><path d="M430 495 L180 375" stroke="rgba(255,255,255,0.45)" stroke-width="1" fill="none"/><path d="M430 495 L180 396" stroke="rgba(255,255,255,0.45)" stroke-width="1" fill="none"/><path d="M430 495 L180 417" stroke="rgba(255,255,255,0.45)" stroke-width="1" fill="none"/><path d="M430 495 L180 438" stroke="rgba(255,255,255,0.45)" stroke-width="1" fill="none"/><path d="M430 495 L180 459" stroke="rgba(255,255,255,0.45)" stroke-width="1" fill="none"/><path d="M430 495 L180 480" stroke="rgba(255,255,255,0.45)" stroke-width="1" fill="none"/><path d="M430 495 L180 501" stroke="rgba(255,255,255,0.45)" stroke-width="1" fill="none"/><path d="M430 495 L180 522" stroke="rgba(255,255,255,0.45)" stroke-width="1" fill="none"/><path d="M430 495 L180 543" stroke="rgba(255,255,255,0.45)" stroke-width="1" fill="none"/><path d="M430 495 L180 564" stroke="rgba(255,255,255,0.45)" stroke-width="1" fill="none"/><path d="M430 495 L180 585" stroke="rgba(255,255,255,0.45)" stroke-width="1" fill="none"/><path d="M430 495 L180 606" stroke="rgba(255,255,255,0.45)" stroke-width="1" fill="none"/><path d="M300 640 Q340 625 420 612" stroke="rgba(255,255,255,0.35)" stroke-width="1" fill="none"/><path d="M360 640 Q400 625 480 612" stroke="rgba(255,255,255,0.35)" stroke-width="1" fill="none"/><path d="M420 640 Q460 625 540 612" stroke="rgba(255,255,255,0.35)" stroke-width="1" fill="none"/><path d="M480 640 Q520 625 600 612" stroke="rgba(255,255,255,0.35)" stroke-width="1" fill="none"/><path d="M540 640 Q580 625 660 612" stroke="rgba(255,255,255,0.35)" stroke-width="1" fill="none"/><path d="M600 640 Q640 625 720 612" stroke="rgba(255,255,255,0.35)" stroke-width="1" fill="none"/><path d="M660 640 Q700 625 780 612" stroke="rgba(255,255,255,0.35)" stroke-width="1" fill="none"/><path d="M720 640 Q760 625 840 612" stroke="rgba(255,255,255,0.35)" stroke-width="1" fill="none"/></svg><!--/WAVES--></div>
<span class="abs" style="left:200px;top:74px;font-size:14px;line-height:16px;color:#333;">CMD BVT - Dashboard</span>
<div class="abs" style="left:200px;top:100px;width:1262px;height:2px;background:#11cc11;"></div>
<div class="abs" style="left:1462px;top:100px;width:421px;height:2px;background:#e8393c;"></div>
<span class="abs" style="left:1273px;top:105px;font-size:10.5px;line-height:12px;color:#777;white-space:nowrap;">(QG 80% not passed. Worst comp.: Others 75% passed)</span>
<svg class="abs" style="left:1539px;top:103px" width="13" height="7" viewBox="0 0 13 7"><path d="M0 6.5 L6.5 0 L13 6.5 Z" fill="#777"/></svg>
<div class="abs" style="left:1859px;top:70px;width:24px;height:27px;background:#fff;border-radius:3px;">
 <div class="abs" style="left:4px;top:8px;width:15px;height:2px;background:#666;"></div>
 <div class="abs" style="left:4px;top:13px;width:15px;height:2px;background:#666;"></div>
 <div class="abs" style="left:4px;top:18px;width:15px;height:2px;background:#666;"></div>
</div>

<!-- KPI quality gate -->
<div class="kpi" style="left:200px;top:130px;width:131px;height:92px;border:1px solid #ebccd1;background:#f2dede;">
 <svg class="abs" style="left:5px;top:3px" width="24" height="25" viewBox="0 0 24 25">
  <path d="M5 3.3 C7.5 2.3 9.8 0.6 12.3 0.6 C14.5 0.6 16.6 0.6 17.6 1.8 C18.6 3 18.9 4.6 19.3 6.5 C20.2 8.3 20.5 10.5 20.2 12.3 C19.8 14.3 18.8 14.9 17.3 14.9 L13.6 14.9 C14.6 16.5 15.2 18.4 14.8 20.3 C14.3 22.3 12.3 23 11.3 21.6 C10.4 20.2 10.2 18.5 9 16.8 C7.9 15.2 6.6 13.8 5 13.6" fill="none" stroke="#a94442" stroke-width="1.4" stroke-linejoin="round"/>
  <rect x="0.2" y="2.2" width="4.9" height="12" rx="0.6" fill="#a94442"/>
  <circle cx="1.5" cy="4.2" r="0.6" fill="#f2dede"/>
 </svg>
 <span class="abs" style="right:5px;top:4px;font-size:14px;line-height:16px;color:#a94442;">not passed</span>
 <div class="abs" style="left:0;top:28px;width:129px;height:20px;background:#f2d0d0;"></div>
 <span class="abs" style="left:5px;top:33px;font-size:11px;line-height:12px;color:#a94442;">failed components</span>
 <span class="abs" style="left:5px;top:54px;font-size:10px;line-height:11px;color:#a94442;">Others (75%)</span>
 <div class="abs" style="left:0;top:69px;width:129px;height:21px;background:#f5f5f5;border-top:1px solid #ebccd1;"></div>
 <span class="abs" style="left:5px;top:72px;font-size:14px;line-height:16px;color:#333;">quality gate</span>
</div>
<!-- KPI passed rate -->
<div class="kpi" style="left:341px;top:130px;width:131px;height:52px;border:1px solid #bce8f1;background:#d9edf7;">
 <svg class="abs" style="left:5px;top:4px" width="21" height="21" viewBox="0 0 21 21">
  <path d="M8.82 2.27 L9.16 -0.72 L11.64 -0.72 L11.98 2.27 L14.32 3.24 L16.68 1.36 L18.44 3.12 L16.56 5.48 L17.53 7.82 L20.52 8.16 L20.52 10.64 L17.53 10.98 L16.56 13.32 L18.44 15.68 L16.68 17.44 L14.32 15.56 L11.98 16.53 L11.64 19.52 L9.16 19.52 L8.82 16.53 L6.48 15.56 L4.12 17.44 L2.36 15.68 L4.24 13.32 L3.27 10.98 L0.28 10.64 L0.28 8.16 L3.27 7.82 L4.24 5.48 L2.36 3.12 L4.12 1.36 L6.48 3.24 Z M14.30 9.40 A3.9 3.9 0 1 0 6.50 9.40 A3.9 3.9 0 1 0 14.30 9.40 Z" fill="#31708f" fill-rule="evenodd"/>
 </svg>
 <span class="abs" style="right:5px;top:4px;font-size:14px;line-height:16px;color:#31708f;">87.5 %</span>
 <div class="abs" style="left:0;top:29px;width:129px;height:21px;background:#f5f5f5;border-top:1px solid #bce8f1;"></div>
 <span class="abs" style="left:5px;top:35px;font-size:10px;line-height:11px;color:#333;">&#8960;</span>
 <span class="abs" style="left:17px;top:33px;font-size:14px;line-height:16px;color:#333;">passed rate</span>
</div>
<!-- KPI tests -->
<div class="kpi" style="left:482px;top:130px;width:131px;height:52px;border:1px solid #bce8f1;background:#d9edf7;">
 <svg class="abs" style="left:5px;top:5px" width="22" height="20" viewBox="0 0 22 20">
  <g fill="#31708f">
   <rect x="0.5" y="0.5" width="4" height="3.5"/><rect x="6" y="0.5" width="15.5" height="3.5"/>
   <rect x="0.5" y="5.5" width="4" height="3.5"/><rect x="6" y="5.5" width="15.5" height="3.5"/>
   <rect x="0.5" y="10.5" width="4" height="3.5"/><rect x="6" y="10.5" width="15.5" height="3.5"/>
   <rect x="0.5" y="15.5" width="4" height="3.5"/><rect x="6" y="15.5" width="15.5" height="3.5"/>
  </g>
 </svg>
 <span class="abs" style="right:5px;top:4px;font-size:14px;line-height:16px;color:#31708f;">8</span>
 <div class="abs" style="left:0;top:29px;width:129px;height:21px;background:#f5f5f5;border-top:1px solid #bce8f1;"></div>
 <span class="abs" style="left:5px;top:33px;font-size:14px;line-height:16px;color:#333;">tests</span>
</div>
<!-- KPI duration -->
<div class="kpi" style="left:623px;top:130px;width:131px;height:66px;border:1px solid #bce8f1;background:#d9edf7;">
 <svg class="abs" style="left:5px;top:3px" width="22" height="22" viewBox="0 0 22 22">
  <circle cx="10.7" cy="10.5" r="9.1" fill="none" stroke="#31708f" stroke-width="2.4"/>
  <path d="M10.2 5 V11.7 H14.6" fill="none" stroke="#31708f" stroke-width="1.7"/>
 </svg>
 <span class="abs" style="right:5px;top:4px;font-size:14px;line-height:16px;color:#31708f;">0 h</span>
 <span class="abs" style="right:5px;top:24px;font-size:14px;line-height:16px;color:#31708f;">0 min</span>
 <div class="abs" style="left:0;top:43px;width:129px;height:21px;background:#f5f5f5;border-top:1px solid #bce8f1;"></div>
 <span class="abs" style="left:5px;top:47px;font-size:14px;line-height:16px;color:#333;">duration</span>
</div>
<!-- exec meta data -->
<div class="kpi" style="left:1470px;top:130px;width:413px;height:66px;border:1px solid #faebcc;background:#fcf8e3;">
 <svg class="abs" style="left:5px;top:4px" width="18" height="18" viewBox="0 0 18 18">
  <circle cx="8" cy="3.8" r="4.1" fill="#8a6d3b"/>
  <path d="M0.3 16 V11 C0.3 9 1.5 8 3 8 C4.5 8.3 6.5 9.2 8 9.2 C9.5 9.2 11.5 8.3 13 8 C14.5 8 15.8 9 15.8 11 V16 C15.8 17 15 17.4 14 17.4 H2 C1 17.4 0.3 17 0.3 16 Z" fill="#8a6d3b"/>
 </svg>
 <span class="abs" style="right:5px;top:4px;font-size:14px;line-height:16px;color:#8a6d3b;font-weight:bold;">28.11.2022 14:35</span>
 <span class="abs" style="right:5px;top:24px;font-size:14px;line-height:16px;color:#8a6d3b;">Tran Duy Ngoan (MS/EMC12-XC) @ HC-C-003GR</span>
 <div class="abs" style="left:0;top:43px;width:411px;height:21px;background:#f5f5f5;border-top:1px solid #faebcc;"></div>
 <span class="abs" style="left:5px;top:47px;font-size:14px;line-height:16px;color:#333;">execution meta data</span>
</div>
<span class="abs" style="left:204px;top:236px;font-size:14px;line-height:16px;color:#999;">Type here...</span>
<div class="abs" style="left:203px;top:267px;width:4px;height:4px;border-radius:50%;background:#808a48;box-shadow:0 0 1.5px 1.5px #62eef2;"></div>


<div class="panel" style="left:201px;top:285px;width:364px;height:333px;"><div class="ph"></div></div>
<div class="panel" style="left:577px;top:285px;width:364px;height:333px;"><div class="ph"></div></div>
<div class="panel" style="left:953px;top:285px;width:365px;height:333px;"><div class="ph"></div></div>
<div class="panel" style="left:201px;top:635px;width:552px;height:394px;"><div class="ph"></div></div>
<div class="panel" style="left:765px;top:635px;width:553px;height:394px;"><div class="ph"></div></div>
<div class="panel" style="left:201px;top:1046px;width:1117px;height:20px;background:#f5f5f5;"></div>
<!-- testsuite relationship -->
<div class="abs" style="left:1330px;top:285px;width:552px;height:25px;background:#f5f5f5;border-radius:3px 3px 0 0;"></div>
<div class="abs" style="left:1330px;top:310px;width:552px;height:34px;background:#f7f7f7;border:1px solid #999;"></div>
<span class="abs" style="left:1343px;top:319px;font-size:14px;line-height:16px;color:#333;">default</span>
<svg class="abs" style="left:1863px;top:322px" width="5" height="9" viewBox="0 0 5 9"><path d="M0 0 L5 4.5 L0 9 Z" fill="#222"/></svg>
<!-- result interpretation -->
<div class="abs" style="left:1330px;top:361px;width:552px;height:55px;background:#fff;border-radius:3px;overflow:hidden;">
 <div class="abs" style="left:0;top:0;width:552px;height:25px;background:#f5f5f5;border-bottom:1px solid #ddd;"></div>
</div>
<span class="abs" style="left:1335px;top:393px;font-size:14px;line-height:16px;color:#333;">This test result is not yet analyzed ...</span>
<div class="abs" style="left:1812px;top:353px;width:70px;height:34px;background:#fff;border-radius:4px 4px 0 0;"></div>
<div class="abs" style="left:1814px;top:355px;width:34px;height:30px;background:#fff;border:1px solid #ccc;border-radius:3px;"></div>
<div class="abs" style="left:1848px;top:355px;width:32px;height:30px;background:#fff;border:1px solid #ccc;border-radius:3px;"></div>
<svg class="abs" style="left:1825px;top:364px" width="12" height="11" viewBox="0 0 12 11">
 <path d="M7 1.5 H1 V10 H9.5 V6" fill="none" stroke="#333" stroke-width="1.1"/>
 <path d="M10 0.5 L11.5 2 L6 7.5 L4 8 L4.5 6 Z" fill="#333"/>
</svg>
<svg class="abs" style="left:1858px;top:364px" width="11" height="11" viewBox="0 0 11 11">
 <path d="M0.5 0.5 H8.5 L10.5 2.5 V10.5 H0.5 Z" fill="none" stroke="#333" stroke-width="1.1"/>
 <rect x="2.5" y="0.8" width="5" height="3" fill="#333"/>
 <rect x="2.5" y="6" width="6" height="4" fill="none" stroke="#333" stroke-width="1"/>
</svg>
<svg class="abs" style="left:0;top:0;pointer-events:none" width="1905" height="1049" viewBox="0 0 1905 1049">
<path d="M208.90 296.80 L212.68 301.46 A6 6 0 1 1 208.90 290.80 Z M210.10 295.80 L210.10 289.90 A5.9 5.9 0 0 1 216.00 295.80 Z M211.20 297.20 L216.50 297.20 A5.3 5.3 0 0 1 215.49 300.32 Z" fill="#333"/>
<text x="220" y="302" font-size="14" fill="#333">Average test result</text>
<g transform="translate(579,291)" fill="#222"><rect x="0" y="0" width="1.4" height="12"/><rect x="0" y="10.8" width="16" height="1.4"/><rect x="3" y="6" width="2" height="5"/><rect x="6.5" y="2" width="2" height="9"/><rect x="10" y="4" width="2" height="7"/><rect x="13.2" y="1" width="2" height="10"/></g>
<text x="599" y="302" font-size="14" fill="#333">Test result per component <tspan fill="#777">(%)</tspan></text>
<g transform="translate(955,291)" fill="#222"><rect x="0" y="0" width="1.4" height="12"/><rect x="0" y="10.8" width="16" height="1.4"/><rect x="3" y="6" width="2" height="5"/><rect x="6.5" y="2" width="2" height="9"/><rect x="10" y="4" width="2" height="7"/><rect x="13.2" y="1" width="2" height="10"/></g>
<text x="976" y="302" font-size="14" fill="#333">Not analyzed issues</text>
<g transform="translate(1331,291)"><circle cx="6" cy="6" r="6" fill="#222"/><rect x="5" y="5" width="2.4" height="5" fill="#fff"/><rect x="4" y="9" width="4.2" height="1.3" fill="#fff"/><rect x="4" y="5" width="2" height="1.2" fill="#fff"/><circle cx="6.2" cy="3" r="1.3" fill="#fff"/></g>
<text x="1348" y="302" font-size="14" fill="#333">Testsuite relationship</text>
<g fill="#555"><circle cx="1852.5" cy="299.5" r="2.2"/><circle cx="1860.5" cy="299.5" r="2.2"/><circle cx="1868.5" cy="299.5" r="2.2"/></g>
<g transform="translate(1331,367)"><circle cx="6" cy="6" r="6" fill="#222"/><rect x="5" y="5" width="2.4" height="5" fill="#fff"/><rect x="4" y="9" width="4.2" height="1.3" fill="#fff"/><rect x="4" y="5" width="2" height="1.2" fill="#fff"/><circle cx="6.2" cy="3" r="1.3" fill="#fff"/></g>
<text x="1348" y="378" font-size="14" fill="#333">Result interpretation</text>
<g transform="translate(203,641)" fill="#222"><rect x="0" y="0" width="1.4" height="12"/><rect x="0" y="10.8" width="16" height="1.4"/><rect x="3" y="6" width="2" height="5"/><rect x="6.5" y="2" width="2" height="9"/><rect x="10" y="4" width="2" height="7"/><rect x="13.2" y="1" width="2" height="10"/></g>
<text x="223" y="652" font-size="14" fill="#333">Test result flow <tspan fill="#777">(%)</tspan></text>
<g transform="translate(767,641)" fill="#222"><rect x="0" y="0" width="1.4" height="12"/><rect x="0" y="10.8" width="16" height="1.4"/><rect x="3" y="6" width="2" height="5"/><rect x="6.5" y="2" width="2" height="9"/><rect x="10" y="4" width="2" height="7"/><rect x="13.2" y="1" width="2" height="10"/></g>
<text x="787" y="652" font-size="14" fill="#333">Tests per component flow <tspan fill="#777">(absolute number)</tspan></text>
</svg>
<!--CHARTS-->
<svg class="abs" style="left:0;top:0;pointer-events:none" width="1905" height="1049" viewBox="0 0 1905 1049">
<rect x="241" y="335" width="40" height="12" fill="#00dc0f"/>
<text x="287" y="343.5" font-size="12" fill="#666" text-anchor="start" >passed</text>
<rect x="336" y="335" width="40" height="12" fill="#ff5050"/>
<text x="382" y="343.5" font-size="12" fill="#666" text-anchor="start" >failed</text>
<rect x="421" y="335" width="40" height="12" fill="#5090ff"/>
<text x="467" y="343.5" font-size="12" fill="#666" text-anchor="start" >unknown</text>
<rect x="335" y="357" width="40" height="12" fill="#c0c0c0"/>
<text x="381" y="365.5" font-size="12" fill="#666" text-anchor="start" >aborted</text>
<path d="M383.2 380.4 A110 110 0 1 1 305.42 412.62 L344.31 451.51 A55 55 0 1 0 383.2 435.4 Z" fill="#00dc0f" stroke="#fff" stroke-width="2"/>
<path d="M305.42 412.62 A110 110 0 0 1 383.2 380.4 L383.2 435.4 A55 55 0 0 0 344.31 451.51 Z" fill="#ff5050" stroke="#fff" stroke-width="2"/>
<rect x="617" y="335" width="40" height="12" fill="rgba(0,220,15,0.4)" stroke="#00dc0f" stroke-width="3"/>
<text x="663" y="343.5" font-size="12" fill="#666" text-anchor="start" >passed</text>
<rect x="712" y="335" width="40" height="12" fill="rgba(255,80,80,0.1)" stroke="rgba(255,80,80,0.3)" stroke-width="3"/>
<text x="758" y="343.5" font-size="12" fill="#666" text-anchor="start" >failed</text>
<rect x="797" y="335" width="40" height="12" fill="rgba(80,144,255,0.1)" stroke="rgba(80,144,255,0.3)" stroke-width="3"/>
<text x="843" y="343.5" font-size="12" fill="#666" text-anchor="start" >unknown</text>
<rect x="711" y="357" width="40" height="12" fill="rgba(192,192,192,0.1)" stroke="rgba(192,192,192,0.3)" stroke-width="3"/>
<text x="757" y="365.5" font-size="12" fill="#666" text-anchor="start" >aborted</text>
<path d="M759 471.2 L775.97 500.6 L742.03 500.6 Z" fill="none" stroke="rgba(0,0,0,0.15)" stroke-width="1"/>
<path d="M759 451.6 L792.95 510.4 L725.05 510.4 Z" fill="none" stroke="rgba(0,0,0,0.15)" stroke-width="1"/>
<path d="M759 432 L809.92 520.2 L708.08 520.2 Z" fill="none" stroke="rgba(0,0,0,0.15)" stroke-width="1"/>
<path d="M759 412.4 L826.9 530 L691.1 530 Z" fill="none" stroke="rgba(0,0,0,0.15)" stroke-width="1"/>
<path d="M759 392.8 L843.87 539.8 L674.13 539.8 Z" fill="none" stroke="rgba(0,0,0,0.15)" stroke-width="1"/>
<line x1="759" y1="490.8" x2="759" y2="392.8" stroke="rgba(0,0,0,0.15)" stroke-width="1"/>
<line x1="759" y1="490.8" x2="843.87" y2="539.8" stroke="rgba(0,0,0,0.15)" stroke-width="1"/>
<line x1="759" y1="490.8" x2="674.13" y2="539.8" stroke="rgba(0,0,0,0.15)" stroke-width="1"/>
<rect x="750.33" y="464.2" width="17.34" height="14" fill="rgba(255,255,255,0.75)"/>
<text x="759" y="474.5" font-size="12" fill="#666" text-anchor="middle" >20</text>
<rect x="750.33" y="444.6" width="17.34" height="14" fill="rgba(255,255,255,0.75)"/>
<text x="759" y="454.9" font-size="12" fill="#666" text-anchor="middle" >40</text>
<rect x="750.33" y="425" width="17.34" height="14" fill="rgba(255,255,255,0.75)"/>
<text x="759" y="435.3" font-size="12" fill="#666" text-anchor="middle" >60</text>
<rect x="750.33" y="405.4" width="17.34" height="14" fill="rgba(255,255,255,0.75)"/>
<text x="759" y="415.7" font-size="12" fill="#666" text-anchor="middle" >80</text>
<rect x="747" y="385.8" width="24.01" height="14" fill="rgba(255,255,255,0.75)"/>
<text x="759" y="396.1" font-size="12" fill="#666" text-anchor="middle" >100</text>
<path d="M759 417.3 L843.87 539.8 L674.13 539.8 Z" fill="rgba(0,220,15,0.4)" stroke="#00dc0f" stroke-width="3" stroke-linejoin="miter"/>
<circle cx="759" cy="417.3" r="3" fill="#00dc0f"/>
<circle cx="843.87" cy="539.8" r="3" fill="#00dc0f"/>
<circle cx="674.13" cy="539.8" r="3" fill="#00dc0f"/>
<path d="M759 466.3 L759 490.8 L759 490.8 Z" fill="rgba(255,80,80,0.1)" stroke="rgba(255,80,80,0.3)" stroke-width="3" stroke-linejoin="miter"/>
<circle cx="759" cy="490.8" r="3.5" fill="#7f8f5c"/>
<circle cx="759" cy="466.3" r="3" fill="rgba(255,80,80,0.15)"/>
<circle cx="742.5" cy="383" r="5" fill="#e8391e" stroke="#222" stroke-width="1"/><rect x="739" y="382" width="7" height="2.2" fill="#fff"/>
<text x="752.5" y="386.5" font-size="10" fill="#555" text-anchor="start" >Others</text>
<text x="626.5" y="549.8" font-size="10" fill="#444" text-anchor="start" >Testsuite2</text>
<path d="M616.3 546.3 L618.7 549.8 L622.8 542.2" fill="none" stroke="#555" stroke-width="1.6"/>
<text x="857.5" y="549.8" font-size="10" fill="#444" text-anchor="start" >Testsuite1</text>
<path d="M847.3 546.3 L849.7 549.8 L853.8 542.2" fill="none" stroke="#555" stroke-width="1.6"/>
<rect x="1073" y="335" width="40" height="12" fill="rgba(255,80,80,0.1)" stroke="#ff5050" stroke-width="3"/>
<text x="1119" y="343.5" font-size="12" fill="#666" text-anchor="start" >not analyzed</text>
<path d="M1135 452.6 L1158.38 493.1 L1111.62 493.1 Z" fill="none" stroke="rgba(0,0,0,0.15)" stroke-width="1"/>
<path d="M1135 425.6 L1181.77 506.6 L1088.23 506.6 Z" fill="none" stroke="rgba(0,0,0,0.15)" stroke-width="1"/>
<path d="M1135 398.6 L1205.15 520.1 L1064.85 520.1 Z" fill="none" stroke="rgba(0,0,0,0.15)" stroke-width="1"/>
<path d="M1135 371.6 L1228.53 533.6 L1041.47 533.6 Z" fill="none" stroke="rgba(0,0,0,0.15)" stroke-width="1"/>
<line x1="1135" y1="479.6" x2="1135" y2="371.6" stroke="rgba(0,0,0,0.15)" stroke-width="1"/>
<line x1="1135" y1="479.6" x2="1228.53" y2="533.6" stroke="rgba(0,0,0,0.15)" stroke-width="1"/>
<line x1="1135" y1="479.6" x2="1041.47" y2="533.6" stroke="rgba(0,0,0,0.15)" stroke-width="1"/>
<rect x="1124.64" y="445.6" width="20.71" height="14" fill="rgba(255,255,255,0.75)"/>
<text x="1135" y="455.9" font-size="12" fill="#666" text-anchor="middle" >2.5</text>
<rect x="1129.66" y="418.6" width="10.67" height="14" fill="rgba(255,255,255,0.75)"/>
<text x="1135" y="428.9" font-size="12" fill="#666" text-anchor="middle" >3</text>
<rect x="1124.64" y="391.6" width="20.71" height="14" fill="rgba(255,255,255,0.75)"/>
<text x="1135" y="401.9" font-size="12" fill="#666" text-anchor="middle" >3.5</text>
<rect x="1133" y="364.6" width="4" height="14" fill="rgba(255,255,255,0.75)"/>
<text x="1135" y="374.9" font-size="12" fill="#666" text-anchor="middle" ></text>
<line x1="1135" y1="479.6" x2="1135" y2="371.6" stroke="#ff5050" stroke-width="3"/>
<circle cx="1135" cy="371.6" r="4" fill="#ff5050"/><circle cx="1135" cy="479.6" r="4" fill="#ff5050"/>
<text x="1135" y="365" font-size="10" fill="#555" text-anchor="middle" >Others</text>
<text x="1014.6" y="545" font-size="10" fill="#555" text-anchor="middle" >Testsuite2</text>
<text x="1255.5" y="544.5" font-size="10" fill="#555" text-anchor="middle" >Testsuite1</text>
<rect x="220.5" y="685.5" width="40" height="12" fill="#555" stroke="#333" stroke-width="1.5"/>
<text x="266" y="693.5" font-size="12" fill="#666" text-anchor="start" >number resets</text>
<rect x="353" y="685" width="40" height="12" fill="#00dc0f"/>
<text x="399" y="693.5" font-size="12" fill="#666" text-anchor="start" >passed</text>
<rect x="448" y="685" width="40" height="12" fill="#ff5050"/>
<text x="494" y="693.5" font-size="12" fill="#666" text-anchor="start" >failed</text>
<rect x="533" y="685" width="40" height="12" fill="#5090ff"/>
<text x="579" y="693.5" font-size="12" fill="#666" text-anchor="start" >unknown</text>
<rect x="637" y="685" width="40" height="12" fill="#c0c0c0"/>
<text x="683" y="693.5" font-size="12" fill="#666" text-anchor="start" >aborted</text>
<line x1="246" y1="707.5" x2="707.5" y2="707.5" stroke="rgba(0,0,0,0.1)" stroke-width="1"/>
<text x="245.5" y="710.3" font-size="12" fill="#666" text-anchor="end" >100</text>
<text x="708" y="710.3" font-size="12" fill="#666" text-anchor="start" >1.0</text>
<line x1="246" y1="735.4" x2="707.5" y2="735.4" stroke="rgba(0,0,0,0.1)" stroke-width="1"/>
<text x="245.5" y="738.2" font-size="12" fill="#666" text-anchor="end" >90</text>
<text x="708" y="738.2" font-size="12" fill="#666" text-anchor="start" >0.8</text>
<line x1="246" y1="763.3" x2="707.5" y2="763.3" stroke="rgba(0,0,0,0.1)" stroke-width="1"/>
<text x="245.5" y="766.1" font-size="12" fill="#666" text-anchor="end" >80</text>
<text x="708" y="766.1" font-size="12" fill="#666" text-anchor="start" >0.6</text>
<line x1="246" y1="791.2" x2="707.5" y2="791.2" stroke="rgba(0,0,0,0.1)" stroke-width="1"/>
<text x="245.5" y="794" font-size="12" fill="#666" text-anchor="end" >70</text>
<text x="708" y="794" font-size="12" fill="#666" text-anchor="start" >0.4</text>
<line x1="246" y1="819.1" x2="707.5" y2="819.1" stroke="rgba(0,0,0,0.1)" stroke-width="1"/>
<text x="245.5" y="821.9" font-size="12" fill="#666" text-anchor="end" >60</text>
<text x="708" y="821.9" font-size="12" fill="#666" text-anchor="start" >0.2</text>
<line x1="246" y1="847" x2="707.5" y2="847" stroke="rgba(0,0,0,0.1)" stroke-width="1"/>
<text x="245.5" y="849.8" font-size="12" fill="#666" text-anchor="end" >50</text>
<text x="708" y="849.8" font-size="12" fill="#666" text-anchor="start" >0</text>
<line x1="246" y1="874.9" x2="707.5" y2="874.9" stroke="rgba(0,0,0,0.1)" stroke-width="1"/>
<text x="245.5" y="877.7" font-size="12" fill="#666" text-anchor="end" >40</text>
<text x="708" y="877.7" font-size="12" fill="#666" text-anchor="start" >-0.2</text>
<line x1="246" y1="902.8" x2="707.5" y2="902.8" stroke="rgba(0,0,0,0.1)" stroke-width="1"/>
<text x="245.5" y="905.6" font-size="12" fill="#666" text-anchor="end" >30</text>
<text x="708" y="905.6" font-size="12" fill="#666" text-anchor="start" >-0.4</text>
<line x1="246" y1="930.7" x2="707.5" y2="930.7" stroke="rgba(0,0,0,0.1)" stroke-width="1"/>
<text x="245.5" y="933.5" font-size="12" fill="#666" text-anchor="end" >20</text>
<text x="708" y="933.5" font-size="12" fill="#666" text-anchor="start" >-0.6</text>
<line x1="246" y1="958.6" x2="707.5" y2="958.6" stroke="rgba(0,0,0,0.1)" stroke-width="1"/>
<text x="245.5" y="961.4" font-size="12" fill="#666" text-anchor="end" >10</text>
<text x="708" y="961.4" font-size="12" fill="#666" text-anchor="start" >-0.8</text>
<line x1="246" y1="986.5" x2="707.5" y2="986.5" stroke="rgba(0,0,0,0.25)" stroke-width="1"/>
<text x="245.5" y="989.3" font-size="12" fill="#666" text-anchor="end" >0</text>
<text x="708" y="989.3" font-size="12" fill="#666" text-anchor="start" >-1.0</text>
<line x1="256.5" y1="707.5" x2="256.5" y2="986.5" stroke="rgba(0,0,0,0.1)" stroke-width="1"/>
<line x1="697.5" y1="707.5" x2="697.5" y2="986.5" stroke="rgba(0,0,0,0.1)" stroke-width="1"/>
<line x1="811" y1="685.5" x2="1302" y2="685.5" stroke="rgba(0,0,0,0.1)" stroke-width="1"/>
<text x="810.8" y="687.5" font-size="12" fill="#666" text-anchor="end" >1.0</text>
<line x1="811" y1="715.55" x2="1302" y2="715.55" stroke="rgba(0,0,0,0.1)" stroke-width="1"/>
<text x="810.8" y="717.55" font-size="12" fill="#666" text-anchor="end" >0.8</text>
<line x1="811" y1="745.6" x2="1302" y2="745.6" stroke="rgba(0,0,0,0.1)" stroke-width="1"/>
<text x="810.8" y="747.6" font-size="12" fill="#666" text-anchor="end" >0.6</text>
<line x1="811" y1="775.65" x2="1302" y2="775.65" stroke="rgba(0,0,0,0.1)" stroke-width="1"/>
<text x="810.8" y="777.65" font-size="12" fill="#666" text-anchor="end" >0.4</text>
<line x1="811" y1="805.7" x2="1302" y2="805.7" stroke="rgba(0,0,0,0.1)" stroke-width="1"/>
<text x="810.8" y="807.7" font-size="12" fill="#666" text-anchor="end" >0.2</text>
<line x1="811" y1="835.75" x2="1302" y2="835.75" stroke="rgba(0,0,0,0.25)" stroke-width="1"/>
<text x="810.8" y="837.75" font-size="12" fill="#666" text-anchor="end" >0</text>
<line x1="811" y1="865.8" x2="1302" y2="865.8" stroke="rgba(0,0,0,0.1)" stroke-width="1"/>
<text x="810.8" y="867.8" font-size="12" fill="#666" text-anchor="end" >-0.2</text>
<line x1="811" y1="895.85" x2="1302" y2="895.85" stroke="rgba(0,0,0,0.1)" stroke-width="1"/>
<text x="810.8" y="897.85" font-size="12" fill="#666" text-anchor="end" >-0.4</text>
<line x1="811" y1="925.9" x2="1302" y2="925.9" stroke="rgba(0,0,0,0.1)" stroke-width="1"/>
<text x="810.8" y="927.9" font-size="12" fill="#666" text-anchor="end" >-0.6</text>
<line x1="811" y1="955.95" x2="1302" y2="955.95" stroke="rgba(0,0,0,0.1)" stroke-width="1"/>
<text x="810.8" y="957.95" font-size="12" fill="#666" text-anchor="end" >-0.8</text>
<line x1="811" y1="986" x2="1302" y2="986" stroke="rgba(0,0,0,0.1)" stroke-width="1"/>
<text x="810.8" y="988" font-size="12" fill="#666" text-anchor="end" >-1.0</text>
<line x1="821.1" y1="685.5" x2="821.1" y2="986" stroke="rgba(0,0,0,0.1)" stroke-width="1"/>
</svg>
<!--/CHARTS-->
<svg class="abs" style="left:1510px;top:555px;pointer-events:none" width="30" height="30" viewBox="1510 555 30 30"><path d="M1520.5 561.2 L1520.6 577.3 L1524.5 573.8 L1527.6 579.3 L1529.8 578.1 L1527.3 573.3 L1531.8 573 Z" fill="#fff" stroke="#111" stroke-width="1.1" stroke-linejoin="round"/></svg>
</body></html>
